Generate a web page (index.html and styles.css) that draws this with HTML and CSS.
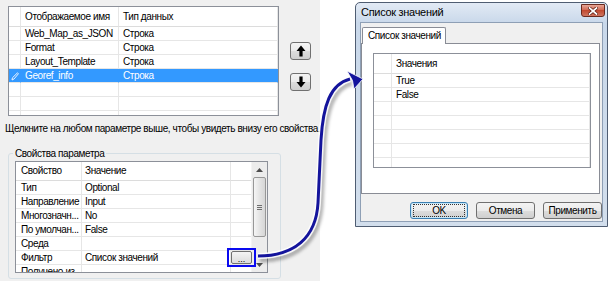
FILE: index.html
```html
<!DOCTYPE html>
<html lang="ru">
<head>
    <meta charset="UTF-8">
    <meta name="viewport" content="width=device-width, initial-scale=1.0">
    <title>Параметры инструмента</title>
    <link rel="stylesheet" href="styles.css">
</head>
<body>
<div class="page">
    <div class="params">
        <div class="top">
            <div class="grid list">
                <div class="row head"><span class="rh"></span><span>Отображаемое имя</span><span>Тип данных</span></div>
                <div class="row"><span class="rh"></span><span>Web_Map_as_JSON</span><span>Строка</span></div>
                <div class="row"><span class="rh"></span><span>Format</span><span>Строка</span></div>
                <div class="row"><span class="rh"></span><span>Layout_Template</span><span>Строка</span></div>
                <div class="row sel">
                    <span class="rh">
                        <svg class="pencil" width="8" height="9" viewBox="0 0 8 9">
                            <path d="M6.5 0.8 L7.4 1.8 L3 7 L1 8 L1.4 5.8 Z" fill="none" stroke="#e8f2ff" stroke-width="1"/>
                        </svg>
                    </span>
                    <span>Georef_info</span><span>Строка</span>
                </div>
                <div class="row"><span class="rh"></span><span></span><span></span></div>
                <div class="row"><span class="rh"></span><span></span><span></span></div>
                <div class="row"><span class="rh"></span><span></span><span></span></div>
            </div>
            <div class="moves">
                <button class="move">
                    <svg width="10" height="12" viewBox="0 0 10 12"><path d="M5 0.5 L9.5 6 H6.6 V11.5 H3.4 V6 H0.5 Z" fill="#000"/></svg>
                </button>
                <button class="move">
                    <svg width="10" height="12" viewBox="0 0 10 12"><path d="M5 11.5 L9.5 6 H6.6 V0.5 H3.4 V6 H0.5 Z" fill="#000"/></svg>
                </button>
            </div>
        </div>

        <p class="hint">Щелкните на любом параметре выше, чтобы увидеть внизу его свойства.</p>

        <fieldset class="group">
            <legend>Свойства параметра</legend>
            <div class="props">
                <div class="props-body">
                    <div class="row head"><span>Свойство</span><span>Значение</span><span></span></div>
                    <div class="row"><span>Тип</span><span>Optional</span><span></span></div>
                    <div class="row"><span>Направление</span><span>Input</span><span></span></div>
                    <div class="row"><span>Многозначн...</span><span>No</span><span></span></div>
                    <div class="row"><span>По умолчан...</span><span>False</span><span></span></div>
                    <div class="row"><span>Среда</span><span></span><span></span></div>
                    <div class="row"><span>Фильтр</span><span>Список значений</span><span></span></div>
                    <div class="row"><span>Получено из</span><span></span><span></span></div>
                </div>
                <div class="scroll">
                    <div class="scroll-btn">
                        <svg width="7" height="4" viewBox="0 0 7 4"><path d="M0 4 L3.5 0 L7 4 Z" fill="#4d4d4d"/></svg>
                    </div>
                    <div class="thumb"><span class="grip"></span></div>
                    <div class="track"></div>
                    <div class="scroll-btn">
                        <svg width="7" height="4" viewBox="0 0 7 4"><path d="M0 0 L3.5 4 L7 0 Z" fill="#4d4d4d"/></svg>
                    </div>
                </div>
                <!-- highlighted "..." button over the filter row -->
                <div class="pick"><button class="dots">...</button></div>
            </div>
        </fieldset>
    </div>

    <div class="stage">
        <div class="dialog">
            <div class="title">
                <span>Список значений</span>
                <span class="close">
                    <svg width="10" height="8" viewBox="0 0 10 8">
                        <path d="M1.5 1 L8.5 7 M8.5 1 L1.5 7" stroke="#5a1a10" stroke-width="3.2" stroke-linecap="square"/>
                        <path d="M1.5 1 L8.5 7 M8.5 1 L1.5 7" stroke="#fff" stroke-width="1.7" stroke-linecap="square"/>
                    </svg>
                </span>
            </div>
            <div class="client">
                <div class="tabs"><span class="tab">Список значений</span></div>
                <div class="panel">
                    <div class="grid values">
                        <div class="row head"><span class="rh"></span><span>Значения</span></div>
                        <div class="row"><span class="rh"></span><span>True</span></div>
                        <div class="row"><span class="rh"></span><span>False</span></div>
                        <div class="row"><span class="rh"></span><span></span></div>
                        <div class="row"><span class="rh"></span><span></span></div>
                        <div class="row"><span class="rh"></span><span></span></div>
                        <div class="row"><span class="rh"></span><span></span></div>
                        <div class="row"><span class="rh"></span><span></span></div>
                    </div>
                </div>
                <div class="actions">
                    <button class="btn ok"><span>OK</span></button>
                    <button class="btn wide">Отмена</button>
                    <button class="btn wide">Применить</button>
                </div>
            </div>
        </div>
    </div>

    <!-- callout from the filter button to the dialog -->
    <svg class="link" width="610" height="281" viewBox="0 0 610 281">
        <defs>
            <filter id="soft" x="-20%" y="-20%" width="140%" height="140%">
                <feGaussianBlur stdDeviation="1.6"/>
            </filter>
        </defs>
        <path d="M258 258 C294 258 316 240 319 205 L322 142 C324 108 331 86 350 81" transform="translate(2 2)"
              fill="none" stroke="rgba(0,0,0,0.28)" stroke-width="5" filter="url(#soft)"/>
        <path d="M258 256 C294 256 316 238 318 203 L321 140 C323 106 330 84 350 79"
              fill="none" stroke="#fff" stroke-width="6" opacity="0.85"/>
        <path d="M258 256 C294 256 316 238 318 203 L321 140 C323 106 330 84 350 79"
              fill="none" stroke="#14149c" stroke-width="3"/>
        <path d="M347 71 L363 79 L354 89 L352.5 80.5 Z" fill="#14149c" stroke="#fff" stroke-width="0.8"/>
    </svg>
</div>
</body>
</html>
```

FILE: styles.css
```css
body {
    margin: 0;
    font-family: "Liberation Sans", Arial, sans-serif;
    font-size: 10px;
    letter-spacing: -0.4px;
    color: #000;
}
.page {
    position: relative;
    display: flex;
    width: 610px;
    height: 281px;
    overflow: hidden;
}
.params {
    width: 320px;
    padding-top: 6px;
    background-color: #f0f0f0;
    box-sizing: border-box;
}
.top {
    display: flex;
    margin-left: 8px;
}

/* data grids */
.grid {
    background-color: #fff;
    border: 1px solid #8c9099;
    box-sizing: border-box;
    overflow: hidden;
}
.row {
    display: grid;
    height: 14px;
    line-height: 13px;
}
.row > span {
    border-right: 1px solid #e6e6e6;
    border-bottom: 1px solid #e6e6e6;
    padding-left: 4px;
    white-space: nowrap;
    overflow: hidden;
}
.row.head {
    height: 20px;
    line-height: 19px;
}
.row.head > span {
    border-bottom-color: #dcdcdc;
}
.row > .rh {
    padding-left: 0;
}
.list {
    width: 271px;
    height: 110px;
}
.list .row {
    grid-template-columns: 12px 98px 1fr;
}
.row.sel > span {
    background-color: #3399ff;
    border-right-color: #3399ff;
    color: #fff;
}
.pencil {
    display: block;
    margin: 3px 0 0 2px;
}

.moves {
    display: flex;
    flex-direction: column;
    gap: 13px;
    margin: 36px 0 0 11px;
}
.move {
    width: 21px;
    height: 18px;
    padding: 0;
    border: 1px solid #707070;
    border-radius: 3px;
    background: linear-gradient(#f4f4f4, #ebebeb 50%, #dcdcdc 51%, #cfcfcf);
    display: flex;
    align-items: center;
    justify-content: center;
}
.move svg {
    display: block;
}

.hint {
    margin: 6px 0 0 5px;
    line-height: 13px;
    white-space: nowrap;
}

/* group box */
.group {
    margin: 12px 0 0 8px;
    width: 273px;
    height: 132px;
    box-sizing: border-box;
    border: 1px solid #d5dfe5;
    border-radius: 3px;
    padding: 0 12px 0 6px;
    min-width: 0;
}
.group legend {
    padding: 0 2px;
    margin-left: -2px;
    line-height: 13px;
}
.props {
    position: relative;
    display: flex;
    width: 253px;
    height: 112px;
    margin-top: 1px;
    border: 1px solid #8c9099;
    box-sizing: border-box;
    background-color: #fff;
}
.props-body {
    width: 236px;
    overflow: hidden;
}
.props .row {
    grid-template-columns: 66px 149px 21px;
}
.props .row.head {
    height: 19px;
    line-height: 18px;
}
.props .row > span:first-child {
    padding-left: 5px;
}
.props .row > span:nth-child(2) {
    padding-left: 3px;
}

.scroll {
    width: 15px;
    display: flex;
    flex-direction: column;
    background-color: #ececec;
    border-left: 1px solid #f4f4f4;
}
.scroll-btn {
    height: 15px;
    display: flex;
    align-items: center;
    justify-content: center;
}
.thumb {
    height: 60px;
    margin: 0 1px;
    border: 1px solid #979797;
    border-radius: 2px;
    box-sizing: border-box;
    background: linear-gradient(to right, #f5f5f5, #e4e4e4 50%, #d6d6d6);
    display: flex;
    align-items: center;
    justify-content: center;
}
.grip {
    width: 5px;
    height: 5px;
    background: repeating-linear-gradient(#6e6e6e 0 1px, transparent 1px 2px);
}
.track {
    flex: 1;
}

.pick {
    position: absolute;
    left: 211px;
    top: 86px;
    width: 29px;
    height: 19px;
    border: 2px solid #0a0aef;
    box-sizing: border-box;
    display: flex;
    align-items: center;
    justify-content: center;
}
.dots {
    width: 21px;
    height: 13px;
    padding: 0;
    border: 1px solid #707070;
    border-radius: 2px;
    background: linear-gradient(#f4f4f4, #dcdcdc);
    font-family: "Liberation Sans", Arial, sans-serif;
    font-size: 9px;
    line-height: 14px;
    color: #000;
}

/* dialog */
.stage {
    flex: 1;
    background-color: #fff;
}
.dialog {
    width: 253px;
    height: 225px;
    margin: 2px 0 0 35px;
    padding: 0 4px 4px 4px;
    box-sizing: border-box;
    border: 1px solid #4f5d72;
    border-radius: 5px 5px 0 0;
    background: linear-gradient(#e2eaf5, #c9d8ea 20px, #d2deec);
}
.title {
    display: flex;
    justify-content: space-between;
    height: 19px;
    line-height: 19px;
    padding-left: 1px;
    font-size: 11px;
    letter-spacing: -0.3px;
}
.close {
    width: 24px;
    height: 13px;
    margin: 1px -2px 0 0;
    border: 1px solid #6b2a1e;
    border-radius: 0 0 3px 3px;
    box-sizing: border-box;
    background: linear-gradient(#e7a696, #d36b55 45%, #c24a30 50%, #cf7560);
    display: flex;
    align-items: center;
    justify-content: center;
}
.close svg {
    display: block;
}
.client {
    height: 200px;
    box-sizing: border-box;
    border: 1px solid #8e9fb5;
    background-color: #f0f0f0;
}
.tabs {
    display: flex;
    margin: 4px 0 -1px 1px;
}
.tab {
    position: relative;
    width: 84px;
    height: 17px;
    box-sizing: border-box;
    padding-left: 5px;
    line-height: 15px;
    white-space: nowrap;
    border: 1px solid #898c95;
    border-bottom: none;
    border-radius: 2px 2px 0 0;
    background-color: #fff;
}
.panel {
    width: 239px;
    height: 151px;
    box-sizing: border-box;
    border: 1px solid #898c95;
    background-color: #fff;
    padding: 9px 0 0 11px;
}
.values {
    width: 218px;
    height: 115px;
}
.values .row {
    grid-template-columns: 18px 1fr;
}
.actions {
    display: flex;
    justify-content: flex-end;
    gap: 8px;
    margin-top: 8px;
}
.btn {
    width: 59px;
    height: 17px;
    padding: 0;
    border: 1px solid #707070;
    border-radius: 3px;
    background: linear-gradient(#f3f3f3, #ebebeb 50%, #dddddd 51%, #cfcfcf);
    font-family: inherit;
    font-size: 10px;
    letter-spacing: -0.4px;
    color: #000;
}
.btn.ok {
    width: 58px;
    border-color: #3c7fb1;
    box-shadow: inset 0 0 0 1px #c5e6f8;
    display: flex;
    align-items: center;
    justify-content: center;
}
.btn.ok span {
    width: 50px;
    height: 11px;
    line-height: 11px;
    outline: 1px dotted #333;
}

.link {
    position: absolute;
    left: 0;
    top: 0;
    pointer-events: none;
}
```
